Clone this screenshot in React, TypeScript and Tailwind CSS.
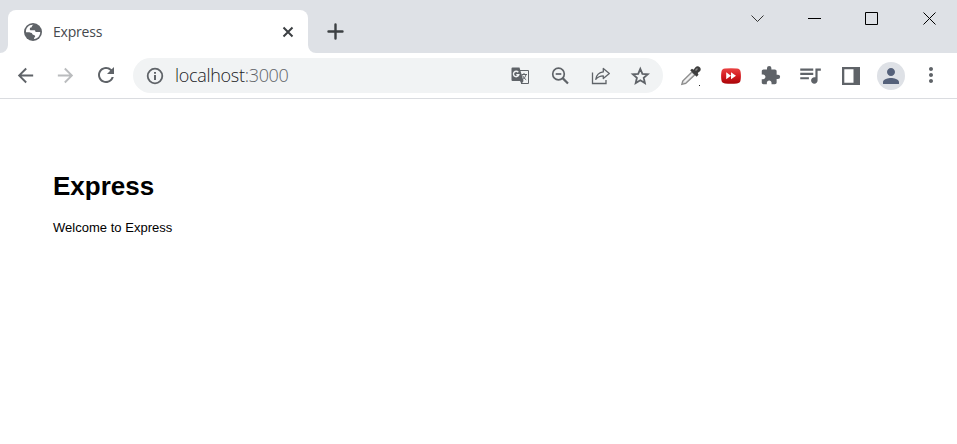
import type { ReactNode } from "react";
import {
  MdArrowBack,
  MdArrowForward,
  MdExtension,
  MdMoreVert,
  MdPerson,
  MdQueueMusic,
  MdRefresh,
} from "react-icons/md";

function Slot({ children, label }: { children: ReactNode; label: string }) {
  return (
    <button
      aria-label={label}
      className="flex h-9 w-10 shrink-0 items-center justify-center text-[#5f6368]"
    >
      {children}
    </button>
  );
}

function GlobeIcon() {
  return (
    <svg width="20" height="20" viewBox="0 0 20 20">
      <circle cx="10" cy="10" r="9" fill="#5f6368" />
      <path
        d="M10.500 2.800C9.300 3.200 8.800 4 8.800 5.200c-1.500 0-2 .8-2 2 0 .9.900 1.100 2.200 1.100h2.200c.9 0 1.300.7 1.300 1.600h4.700c.2 3.400-2.300 6.600-6 7.200-.5-1 .2-1.700 1-2.300-.2-1.300-.8-2-2.100-2-.7 0-.8-1-1.400-1.700-.9-.9-3.700-.9-5.700-.9C2.600 6 6 2.400 10.500 2.800z"
        fill="#fff"
      />
    </svg>
  );
}

function InfoIcon() {
  return (
    <svg width="18" height="18" viewBox="0 0 18 18">
      <circle cx="9" cy="9" r="7.300" fill="none" stroke="currentColor" strokeWidth="1.800" />
      <path d="M8 5h2v1.800H8zM8 8h2v5H8z" fill="currentColor" />
    </svg>
  );
}

function TabStrip() {
  return (
    <div className="flex h-[53px] items-end bg-[#dee1e6]">
      <svg width="8" height="8" viewBox="0 0 8 8" className="shrink-0">
        <path d="M8 0v8H0a8 8 0 0 0 8-8z" fill="#fff" />
      </svg>
      <div className="flex h-[43px] w-[300px] items-center rounded-t-lg bg-white pr-3 pl-[15px]">
        <GlobeIcon />
        <span className="ml-[10px] grow font-['Open_Sans',sans-serif] text-[14px] tracking-[-0.2px] text-[#45494d]">
          Express
        </span>
        <svg width="16" height="16" viewBox="0 0 16 16" className="text-[#3c4043]">
          <path d="M3.5 3.5l9 9M12.5 3.5l-9 9" stroke="currentColor" strokeWidth="2" />
        </svg>
      </div>
      <svg width="8" height="8" viewBox="0 0 8 8" className="shrink-0">
        <path d="M0 0v8h8a8 8 0 0 1-8-8z" fill="#fff" />
      </svg>
      <button aria-label="New tab" className="ml-[11px] flex h-[43px] items-center">
        <svg width="17" height="17" viewBox="0 0 17 17">
          <path d="M8.500 1.500v14M1.500 8.500h14" stroke="#3c4043" strokeWidth="2.400" strokeLinecap="round" />
        </svg>
      </button>
      <div className="ml-auto flex h-full items-start">
        <button aria-label="Search tabs" className="flex h-[37px] w-[57px] items-center justify-center">
          <svg width="13" height="13" viewBox="0 0 13 13">
            <path d="M.5 3.5l6 6 6-6" fill="none" stroke="#333" />
          </svg>
        </button>
        <button aria-label="Minimize" className="flex h-[37px] w-[57px] items-center justify-center">
          <svg width="13" height="13" viewBox="0 0 13 13">
            <path d="M0 6.5h13" stroke="#000" />
          </svg>
        </button>
        <button aria-label="Maximize" className="flex h-[37px] w-[57px] items-center justify-center">
          <svg width="13" height="13" viewBox="0 0 13 13">
            <path d="M.5.5h12v12H.5z" fill="none" stroke="#000" />
          </svg>
        </button>
        <button aria-label="Close" className="flex h-[37px] w-[57px] items-center justify-center pl-px">
          <svg width="13" height="13" viewBox="0 0 13 13">
            <path d="M.5.5l12 12M12.5.5l-12 12" stroke="#000" />
          </svg>
        </button>
      </div>
    </div>
  );
}

function TranslateIcon() {
  return (
    <svg width="20" height="20" viewBox="0 0 20 20">
      <path d="M8 4.500h10.500v13H11" fill="none" stroke="currentColor" strokeWidth="1" />
      <path d="M2.500 1.500h7L13.500 15h-11a1 1 0 0 1-1-1V2.500a1 1 0 0 1 1-1z" fill="currentColor" />
      <path d="M10 15l1.500 3 2-3z" fill="currentColor" />
      <path d="M8.300 6.300A2.700 2.700 0 1 0 8.800 8.700H6.300" fill="none" stroke="#f1f3f4" strokeWidth="1.400" />
      <path d="M11.500 8.500H17M14 7v1.500M16 8.500c-.5 2.300-1.700 3.800-3.300 5M12.500 9.500c.8 1.800 2 3.200 3.700 4.300" fill="none" stroke="currentColor" strokeWidth="1" />
    </svg>
  );
}

function ZoomOutIcon() {
  return (
    <svg width="20" height="20" viewBox="0 0 20 20" fill="none" stroke="currentColor">
      <circle cx="8.500" cy="8" r="5.800" strokeWidth="1.700" />
      <path d="M5.700 8h5.600" strokeWidth="1.700" />
      <path d="M12.600 12.100l5.400 5.400" strokeWidth="2.200" />
    </svg>
  );
}

function ShareIcon() {
  return (
    <svg width="20" height="20" viewBox="0 0 20 20" fill="none" stroke="currentColor" strokeWidth="1.300">
      <path d="M2.500 6.500v11h13.500V14" />
      <path d="M13.300 2.500l6 5-6 5V9.900c-3.200 0-5.500 1.100-7.500 3.400.6-4.200 3-6.900 7.500-7.400z" strokeLinejoin="round" />
    </svg>
  );
}

function StarIcon() {
  return (
    <svg width="20" height="20" viewBox="0 0 20 20">
      <path
        d="M10.300 2.800l2.100 5 5.400.5-4.100 3.500 1.200 5.200-4.600-2.800L5.700 17l1.200-5.200-4.100-3.500 5.400-.5z"
        fill="none"
        stroke="currentColor"
        strokeWidth="1.800"
      />
    </svg>
  );
}

function EyedropperIcon() {
  return (
    <svg width="22" height="22" viewBox="0 0 22 22" className="ml-0.5">
      <path d="M1.800 19.300l.9-3.300L12 6.800l3 3-9.300 8.700z" fill="#d8d8d8" stroke="#8b8b8b" strokeWidth="1.300" />
      <path d="M4.500 16.800l8-7.700" stroke="#f8f8f8" strokeWidth="1.300" />
      <path d="M10.200 5.200l1.800-1.500 1.500 1 2-2.500c2.400-2.600 6.700.6 4.700 3.700L17.700 8l.8 1.800-1.900 1.900z" fill="#3d3d3d" />
      <path d="M15.500 5.500l2-2" stroke="#888" strokeWidth="1.400" />
      <path d="M19 20h1v1h-1z" fill="#222" />
    </svg>
  );
}

function FastForwardIcon() {
  return (
    <svg width="20" height="20" viewBox="0 0 20 20" className="ml-px">
      <defs>
        <linearGradient id="red" x1="0" y1="0" x2="0" y2="1">
          <stop offset="0" stopColor="#e94343" />
          <stop offset=".5" stopColor="#d41b20" />
          <stop offset="1" stopColor="#a90508" />
        </linearGradient>
      </defs>
      <path d="M4 2.600Q10 1.900 16 2.600 19.200 2.800 19.600 6 20.200 10 19.600 14 19.200 17.200 16 17.400 10 18.100 4 17.400.8 17.200.4 14-.2 10 .4 6 .8 2.800 4 2.600z" fill="url(#red)" />
      <path d="M5.200 6.300L10 9.800l-4.800 3.500zM10 6.300l5 3.500-5 3.500z" fill="#fff" />
    </svg>
  );
}

function SidePanelIcon() {
  return (
    <svg width="18" height="18" viewBox="0 0 18 18" className="ml-px">
      <path fillRule="evenodd" d="M0 0h18v18H0zM2.300 2.300v13.400h9.200V2.300z" fill="currentColor" />
    </svg>
  );
}

function Toolbar() {
  return (
    <div className="flex h-[46px] items-center border-b border-[#dadce0] bg-white pl-[5px]">
      <Slot label="Back">
        <MdArrowBack className="mb-px size-[23px]" />
      </Slot>
      <Slot label="Forward">
        <MdArrowForward className="mb-px size-[23px] text-[#babcbe]" />
      </Slot>
      <Slot label="Reload">
        <MdRefresh className="mb-px ml-px size-6" />
      </Slot>
      <div className="ml-2 flex h-[35px] w-[530px] items-center rounded-full bg-[#f1f3f4] pr-[3px] pl-0.5">
        <Slot label="Site information">
          <InfoIcon />
        </Slot>
        <span className="grow font-['Open_Sans',sans-serif] text-[18px] font-light tracking-[-0.3px] text-[#202124]">
          localhost<span className="text-[#5f6368]">:3000</span>
        </span>
        <Slot label="Translate">
          <TranslateIcon />
        </Slot>
        <Slot label="Zoom">
          <ZoomOutIcon />
        </Slot>
        <Slot label="Share">
          <ShareIcon />
        </Slot>
        <Slot label="Bookmark">
          <StarIcon />
        </Slot>
      </div>
      <div className="ml-[7px] flex items-center">
        <Slot label="Color picker">
          <EyedropperIcon />
        </Slot>
        <Slot label="Playback speed">
          <FastForwardIcon />
        </Slot>
        <Slot label="Extensions">
          <MdExtension className="size-[21px]" />
        </Slot>
        <Slot label="Media">
          <MdQueueMusic className="mb-px size-[26px]" />
        </Slot>
        <Slot label="Side panel">
          <SidePanelIcon />
        </Slot>
        <Slot label="Profile">
          <span className="ml-0.5 flex size-7 items-center justify-center rounded-full bg-[#dee1e6]">
            <MdPerson className="size-6 text-[#55617a]" />
          </span>
        </Slot>
        <Slot label="Menu">
          <MdMoreVert className="mb-px ml-px size-6" />
        </Slot>
      </div>
    </div>
  );
}

export default function App() {
  return (
    <div className="flex h-screen flex-col overflow-hidden bg-white">
      <TabStrip />
      <Toolbar />
      <main className="grow px-[53px] pt-[72px] font-['Liberation_Sans',Arial,sans-serif] text-black">
        <h1 className="text-[26px] leading-[30px] font-bold">Express</h1>
        <p className="mt-[19px] text-[13px] leading-4 tracking-[0.02px]">Welcome to Express</p>
      </main>
    </div>
  );
}
